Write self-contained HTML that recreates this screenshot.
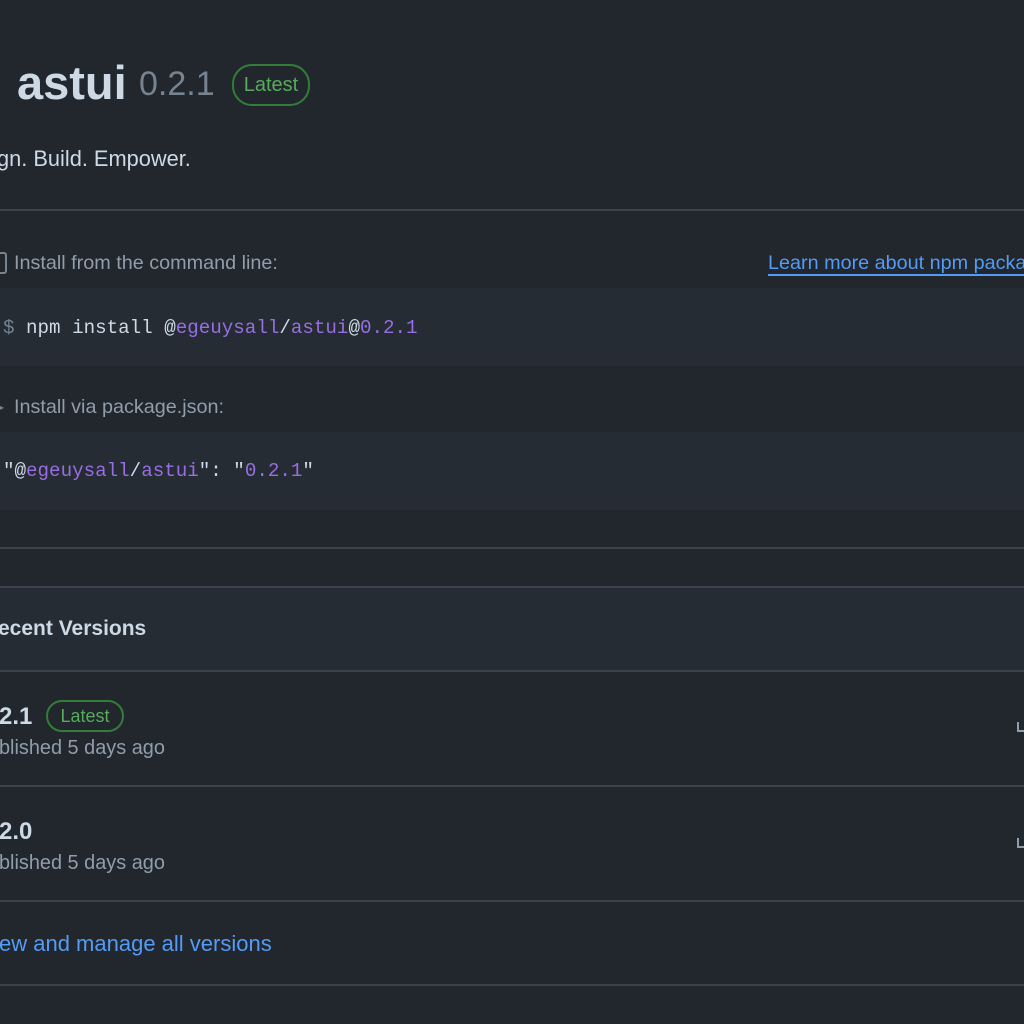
<!DOCTYPE html>
<html><head><style>
body{margin:0;width:1024px;height:1024px;overflow:hidden;background:#22272e;font-family:"Liberation Sans",sans-serif;color:#adbac7;position:relative}
.a{position:absolute;white-space:nowrap}
.hr{position:absolute;left:0;width:1024px;height:2px;background:#3b424b}
.mono{font-family:"Liberation Mono",monospace;font-size:19.2px;color:#cdd9e5}
.p{color:#986ee2}
.badge{position:absolute;border:2px solid #347d39;border-radius:20px;color:#57ab5a;box-sizing:border-box;text-align:center}
</style></head><body>
<div class="a" style="left:17px;top:55px;font-size:47px;font-weight:bold;color:#cdd9e5">astui</div>
<div class="a" style="left:139px;top:65px;font-size:34px;color:#768390">0.2.1</div>
<div class="badge" style="left:232px;top:64px;width:78px;height:42px;line-height:38px;font-size:20px">Latest</div>
<div class="a" style="left:-3px;top:146px;font-size:21.8px;color:#cdd9e5">gn. Build. Empower.</div>
<div class="hr" style="top:209px"></div>
<div class="a" style="left:-6px;top:252px;width:9px;height:18px;border:2px solid #768390;border-radius:3px"></div>
<div class="a" style="left:14px;top:252px;font-size:19.8px;color:#909dab">Install from the command line:</div>
<div class="a" style="left:768px;top:252px;font-size:19.8px;color:#539bf5;border-bottom:2px solid #539bf5;line-height:22px">Learn more about npm packages</div>
<div class="a" style="left:0;top:288px;width:1024px;height:78px;background:#262c34"></div>
<div class="a mono" style="left:3px;top:317px"><span style="color:#768390">$</span> npm install @<span class="p">egeuysall</span>/<span class="p">astui</span>@<span class="p">0.2.1</span></div>
<div class="a" style="left:-2px;top:400px;font-size:12px;color:#768390">▸</div>
<div class="a" style="left:14px;top:396px;font-size:19.8px;color:#909dab">Install via package.json:</div>
<div class="a" style="left:0;top:432px;width:1024px;height:78px;background:#262c34"></div>
<div class="a mono" style="left:3px;top:460px">"@<span class="p">egeuysall</span>/<span class="p">astui</span>": "<span class="p">0.2.1</span>"</div>
<div class="hr" style="top:547px"></div>
<div class="a" style="left:0;top:587px;width:1024px;height:83px;background:#262c34"></div>
<div class="hr" style="top:586px"></div>
<div class="a" style="left:-2px;top:617px;font-size:21px;font-weight:bold;color:#cdd9e5">ecent Versions</div>
<div class="hr" style="top:670px"></div>
<div class="a" style="left:-1px;top:703px;font-size:24px;font-weight:bold;color:#cdd9e5">2.1</div>
<div class="badge" style="left:46px;top:700px;width:78px;height:32px;line-height:28px;font-size:18px">Latest</div>
<div class="a" style="left:-1px;top:737px;font-size:19.9px;color:#909dab">blished 5 days ago</div>
<div class="a" style="left:1017px;top:722px;width:10px;height:8px;border:2px solid #909dab;border-top:none"></div>
<div class="hr" style="top:785px"></div>
<div class="a" style="left:-1px;top:818px;font-size:24px;font-weight:bold;color:#cdd9e5">2.0</div>
<div class="a" style="left:-1px;top:852px;font-size:19.9px;color:#909dab">blished 5 days ago</div>
<div class="a" style="left:1017px;top:838px;width:10px;height:8px;border:2px solid #909dab;border-top:none"></div>
<div class="hr" style="top:900px"></div>
<div class="a" style="left:-1px;top:931px;font-size:22px;color:#539bf5">ew and manage all versions</div>
<div class="hr" style="top:984px"></div>
</body></html>
